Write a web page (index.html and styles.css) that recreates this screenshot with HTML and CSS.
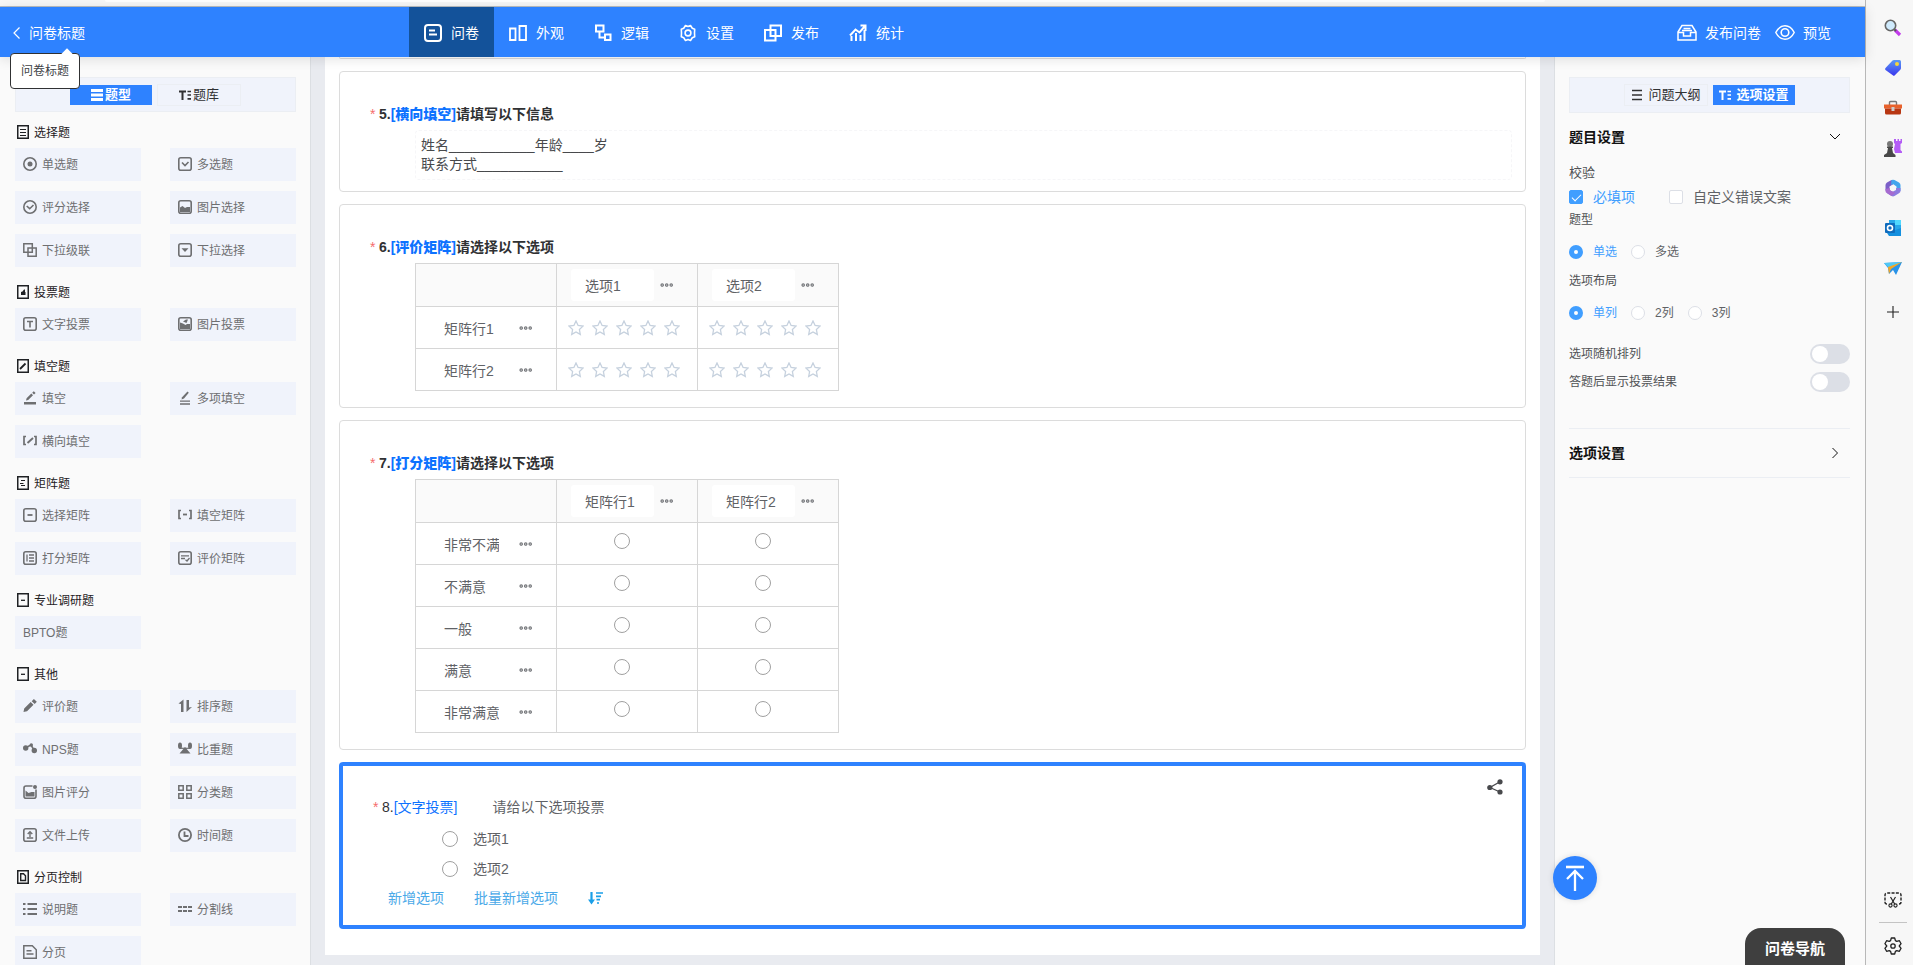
FILE: index.html
```html
<!DOCTYPE html>
<html lang="zh-CN">
<head>
<meta charset="utf-8">
<title>问卷标题</title>
<link rel="stylesheet" href="styles.css">
</head>
<body>
<svg class="sprite" aria-hidden="true">
  <symbol id="i-doc" viewBox="0 0 12 14"><rect x=".75" y=".75" width="10.500" height="12.500" fill="none" stroke="currentColor" stroke-width="1.500"/><path d="M3 4.500h6M3 7.500h6M3 10.500h6" stroke="currentColor"/></symbol>
  <symbol id="i-docvote" viewBox="0 0 12 14"><rect x=".75" y=".75" width="10.500" height="12.500" fill="none" stroke="currentColor" stroke-width="1.500"/><path d="M4 10V7l1.500-.5L7 4.500h1V7h.500v3z" fill="currentColor"/></symbol>
  <symbol id="i-docpen" viewBox="0 0 12 14"><rect x=".75" y=".75" width="10.500" height="12.500" fill="none" stroke="currentColor" stroke-width="1.500"/><path d="M3 10l5.500-5.500" stroke="currentColor" stroke-width="1.800"/></symbol>
  <symbol id="i-docmat" viewBox="0 0 12 14"><rect x=".75" y=".75" width="10.500" height="12.500" fill="none" stroke="currentColor" stroke-width="1.500"/><path d="M4 4.500h4M3 7.500h3.500M4 9.500h4" stroke="currentColor" stroke-width="1.200"/></symbol>
  <symbol id="i-docdash" viewBox="0 0 12 14"><rect x=".75" y=".75" width="10.500" height="12.500" fill="none" stroke="currentColor" stroke-width="1.500"/><path d="M4 7.300h4" stroke="currentColor" stroke-width="1.300"/></symbol>
  <symbol id="i-docpage" viewBox="0 0 12 14"><rect x=".75" y=".75" width="10.500" height="12.500" fill="none" stroke="currentColor" stroke-width="1.500"/><path d="M3.700 3.700h2.800l2 2v4.800H3.700z" fill="none" stroke="currentColor" stroke-width="1.400"/></symbol>

  <symbol id="q-radio" viewBox="0 0 14 14"><circle cx="7" cy="7" r="6.200" fill="none" stroke="currentColor" stroke-width="1.600"/><circle cx="7" cy="7" r="2.500" fill="currentColor"/></symbol>
  <symbol id="q-check" viewBox="0 0 14 14"><rect x=".8" y=".8" width="12.400" height="12.400" rx="2" fill="none" stroke="currentColor" stroke-width="1.600"/><path d="M4 5.500l3 3 3.500-3.500" fill="none" stroke="currentColor" stroke-width="1.600"/></symbol>
  <symbol id="q-ok" viewBox="0 0 14 14"><circle cx="7" cy="7" r="6.200" fill="none" stroke="currentColor" stroke-width="1.600"/><path d="M3.700 6l3 2.700L10.500 5" fill="none" stroke="currentColor" stroke-width="1.600"/></symbol>
  <symbol id="q-img" viewBox="0 0 14 14"><rect x=".8" y=".8" width="12.400" height="12.400" rx="2" fill="none" stroke="currentColor" stroke-width="1.600"/><path d="M2 12V7.500L4.500 6 7 8l2-1h3v5z" fill="currentColor"/></symbol>
  <symbol id="q-casc" viewBox="0 0 14 14"><path d="M.8.800h8.500v8.500H.8zM5 5h8.200v8.200H5z" fill="none" stroke="currentColor" stroke-width="1.500"/></symbol>
  <symbol id="q-drop" viewBox="0 0 14 14"><rect x=".8" y=".8" width="12.400" height="12.400" rx="2" fill="none" stroke="currentColor" stroke-width="1.600"/><path d="M3.500 5.200h7L7 9z" fill="currentColor"/></symbol>
  <symbol id="q-t" viewBox="0 0 14 14"><rect x=".8" y=".8" width="12.400" height="12.400" rx="2" fill="none" stroke="currentColor" stroke-width="1.600"/><path d="M4 4.500h6M7 4.500v6" stroke="currentColor" stroke-width="1.600"/></symbol>
  <symbol id="q-imgvote" viewBox="0 0 14 14"><rect x=".8" y=".8" width="12.400" height="12.400" rx="2" fill="none" stroke="currentColor" stroke-width="1.600"/><path d="M2 12V5.500l3 1L7.500 8 9 7h3v5zM5 4.500L8 2.500h2L8.500 6z" fill="currentColor"/></symbol>
  <symbol id="q-fill" viewBox="0 0 14 14"><path d="M1 11h12v2.500H1z" fill="currentColor"/><path d="M3 9.500l.6-2.300L8.300 2.500l1.700 1.700L5.200 9zM9.200 1.700L10.800.2l1.800 1.700-1.600 1.600z" fill="currentColor"/></symbol>
  <symbol id="q-fills" viewBox="0 0 14 14"><path d="M2 10.200h10M2 13h10" stroke="currentColor" stroke-width="1.300"/><path d="M3.500 8.500l.6-2.300L9.500.5l1.300 1.300L6 7.500z" fill="currentColor"/></symbol>
  <symbol id="q-hfill" viewBox="0 0 14 14"><path d="M3 2.500H1v8h2M11 2.500h2v8h-2" fill="none" stroke="currentColor" stroke-width="1.700"/><path d="M4.500 9L10 4" stroke="currentColor" stroke-width="1.900"/></symbol>
  <symbol id="q-sel" viewBox="0 0 14 14"><rect x=".8" y=".8" width="12.400" height="12.400" rx="2" fill="none" stroke="currentColor" stroke-width="1.600"/><path d="M4.500 7h5" stroke="currentColor" stroke-width="1.800"/></symbol>
  <symbol id="q-brack" viewBox="0 0 14 14"><path d="M3 2.500H1v8h2M11 2.500h2v8h-2" fill="none" stroke="currentColor" stroke-width="1.700"/><path d="M5 6.500h4" stroke="currentColor" stroke-width="1.800"/></symbol>
  <symbol id="q-score" viewBox="0 0 14 14"><rect x=".8" y=".8" width="12.400" height="12.400" rx="2" fill="none" stroke="currentColor" stroke-width="1.600"/><path d="M4 3.500v7M6 4h5M6 7h5M6 10h5" stroke="currentColor" stroke-width="1.300"/></symbol>
  <symbol id="q-eval" viewBox="0 0 14 14"><rect x=".8" y=".8" width="12.400" height="12.400" rx="2" fill="none" stroke="currentColor" stroke-width="1.600"/><path d="M3 4.800h8M3 7.500h4M7.500 8.800l1.500 1.200 2.500-3" fill="none" stroke="currentColor" stroke-width="1.300"/></symbol>
  <symbol id="q-pen" viewBox="0 0 14 14"><path d="M.5 13l.7-3.500L7.700 3l2.800 2.800L4 12.300zM8.700 2.200L10.900 0l2.900 2.800-2.100 2.100z" fill="currentColor"/></symbol>
  <symbol id="q-sort" viewBox="0 0 14 14"><path d="M.5 4.500L5.500.5V13H3V5zM8.500 1H11v7.500l3-.5-5.500 5z" fill="currentColor"/></symbol>
  <symbol id="q-nps" viewBox="0 0 14 14"><circle cx="2.700" cy="6" r="2.700" fill="currentColor"/><circle cx="11.300" cy="8.500" r="2.700" fill="currentColor"/><path d="M3 5.500l5-2.500 3 5" fill="none" stroke="currentColor" stroke-width="1.600"/><circle cx="8.300" cy="3" r="1.700" fill="currentColor"/></symbol>
  <symbol id="q-weight" viewBox="0 0 14 14"><path d="M7 5L12.500 11.500h-11z" fill="currentColor"/><ellipse cx="2" cy="3.800" rx="2" ry="3.300" fill="currentColor"/><ellipse cx="12" cy="3.800" rx="2" ry="3.300" fill="currentColor"/><path d="M2 6.300h10" stroke="currentColor" stroke-width="1.200"/></symbol>
  <symbol id="q-imgscore" viewBox="0 0 14 14"><path d="M9.500 1H3a2 2 0 0 0-2 2v8.200a2 2 0 0 0 2 2h8a2 2 0 0 0 2-2V4.500" fill="none" stroke="currentColor" stroke-width="1.600"/><path d="M2.500 11.500V5.500L5.500 8l3-1h3v4.500z" fill="currentColor"/><circle cx="12" cy="2" r="2" fill="currentColor"/></symbol>
  <symbol id="q-class" viewBox="0 0 14 14"><path d="M.8.800h4.400v4.400H.8zM8.800.8h4.400v4.400H8.800zM.8 8.800h4.400v4.400H.8zM8.800 8.800h4.400v4.400H8.800z" fill="none" stroke="currentColor" stroke-width="1.500"/></symbol>
  <symbol id="q-up" viewBox="0 0 14 14"><rect x=".8" y=".8" width="12.400" height="12.400" rx="2" fill="none" stroke="currentColor" stroke-width="1.600"/><path d="M7 9V4M4.700 6L7 3.700 9.300 6M3.800 10h6.400" fill="none" stroke="currentColor" stroke-width="1.400"/></symbol>
  <symbol id="q-time" viewBox="0 0 14 14"><circle cx="7" cy="7" r="6.100" fill="none" stroke="currentColor" stroke-width="1.800"/><path d="M6.500 3.500V8h4" fill="none" stroke="currentColor" stroke-width="1.800"/></symbol>
  <symbol id="q-list" viewBox="0 0 14 14"><path d="M4.500 2H14M4.500 7H14M4.500 12H14M0 2h2.500M0 7h2.500M0 12h2.500" stroke="currentColor" stroke-width="2.200"/></symbol>
  <symbol id="q-split" viewBox="0 0 14 14"><path d="M0 5h14M0 9h14" stroke="currentColor" stroke-width="1.800" stroke-dasharray="4 1"/></symbol>
  <symbol id="q-page" viewBox="0 0 14 14"><path d="M.8.800h8.500l4 4v8.400H.8zM3.500 5.800h5M3.500 9h7" fill="none" stroke="currentColor" stroke-width="1.500"/></symbol>

  <symbol id="n-form" viewBox="0 0 18 18"><rect x="1" y="1" width="16" height="16" rx="3" fill="none" stroke="currentColor" stroke-width="2"/><path d="M5 6.500h6M5 10.500h8" stroke="currentColor" stroke-width="2"/></symbol>
  <symbol id="n-look" viewBox="0 0 18 18"><path d="M1 4.500h5.500v11.500H1zM10.500 2H17v14h-6.500z" fill="none" stroke="currentColor" stroke-width="1.800"/></symbol>
  <symbol id="n-logic" viewBox="0 0 18 18"><path d="M2 1.500h7.500v6H2zM11 10.500h5.500V16H11zM5.500 7.500v6H11" fill="none" stroke="currentColor" stroke-width="2"/></symbol>
  <symbol id="n-gear" viewBox="0 0 18 18"><path d="M6.500 1.500L9 2.500l2.500-1 1.800 2.800 2.400 1L15.500 9l.2 3.700-2.400 1-1.800 2.800-2.500-1-2.500 1-1.800-2.800-2.400-1L2.500 9l-.2-3.700 2.400-1z" fill="none" stroke="currentColor" stroke-width="1.600" stroke-linejoin="round"/><circle cx="9" cy="9" r="2.900" fill="none" stroke="currentColor" stroke-width="1.600"/></symbol>
  <symbol id="n-pub" viewBox="0 0 18 18"><path d="M1 6h10.500v10.500H1zM6.500 1.500H17V12H6.500z" fill="none" stroke="currentColor" stroke-width="2"/></symbol>
  <symbol id="n-stat" viewBox="0 0 18 18"><path d="M2.500 17v-5M7 17V9M11.500 17v-6M15.500 17V6" stroke="currentColor" stroke-width="2"/><path d="M1 11.500L6.500 5.500l4 3L16 2M11.500 1.500h5V7" fill="none" stroke="currentColor" stroke-width="2"/></symbol>
  <symbol id="n-inbox" viewBox="0 0 20 18"><path d="M1 8l4-6.500h10L19 8v8H1zM1 8.500h5.500V12h7V8.500H19M6.500 4.500h7M5 6.500h10" fill="none" stroke="currentColor" stroke-width="1.500"/></symbol>
  <symbol id="n-eye" viewBox="0 0 20 18"><path d="M.8 8.500c4.500-9 13.900-9 18.400 0-4.500 9-13.900 9-18.400 0z" fill="none" stroke="currentColor" stroke-width="1.500"/><circle cx="10" cy="8.500" r="3.800" fill="none" stroke="currentColor" stroke-width="1.600"/></symbol>

  <symbol id="t-lines" viewBox="0 0 12 12"><path d="M1 1.500h10M1 6h10M1 10.500h10" stroke="currentColor" stroke-width="1.600"/></symbol>
  <symbol id="t-thick" viewBox="0 0 12 12"><path d="M0 1.500h12M0 6h12M0 10.500h12" stroke="currentColor" stroke-width="2.800"/></symbol>
  <symbol id="t-type" viewBox="0 0 12 12"><path d="M0 2.500h7M3.500 2.500V11" stroke="currentColor" stroke-width="2"/><path d="M8.500 2.500H12M8.500 6H12M8.500 9.800H12" stroke="currentColor" stroke-width="1.700"/></symbol>
  <symbol id="star" viewBox="0 0 16 16"><path d="M8 1l2.100 4.500 4.900.6-3.600 3.400.9 4.900L8 12l-4.300 2.400.9-4.900L1 6.100l4.900-.6z" fill="none" stroke="currentColor" stroke-width="1.300"/></symbol>
  <symbol id="dots" viewBox="0 0 14 6"><circle cx="2.200" cy="3" r="1.200" fill="none" stroke="currentColor" stroke-width="1.200"/><circle cx="6.700" cy="3" r="1.200" fill="none" stroke="currentColor" stroke-width="1.200"/><circle cx="11.200" cy="3" r="1.200" fill="none" stroke="currentColor" stroke-width="1.200"/></symbol>
</svg>

<div class="app">
  <div class="browser">
    <div class="chrome"><div class="address"></div></div>
    <header class="header">
      <a class="back" href="#"><svg width="7" height="12" viewBox="0 0 7 12"><path d="M6.500.5L1 6l5.500 5.500" fill="none" stroke="currentColor" stroke-width="1.200"/></svg>问卷标题</a>
      <nav class="nav">
        <a class="nav-item active" href="#"><svg><use href="#n-form"/></svg>问卷</a>
        <a class="nav-item" href="#"><svg><use href="#n-look"/></svg>外观</a>
        <a class="nav-item" href="#"><svg><use href="#n-logic"/></svg>逻辑</a>
        <a class="nav-item" href="#"><svg><use href="#n-gear"/></svg>设置</a>
        <a class="nav-item" href="#"><svg><use href="#n-pub"/></svg>发布</a>
        <a class="nav-item" href="#"><svg><use href="#n-stat"/></svg>统计</a>
      </nav>
      <div class="actions">
        <button type="button"><svg><use href="#n-inbox"/></svg>发布问卷</button>
        <button type="button"><svg><use href="#n-eye"/></svg>预览</button>
      </div>
      <div class="tooltip" role="tooltip">问卷标题</div>
    </header>

    <div class="workspace">
      <aside class="left">
        <div class="tabs">
          <button type="button" class="tab on"><svg><use href="#t-thick"/></svg>题型</button>
          <button type="button" class="tab"><svg><use href="#t-type"/></svg>题库</button>
        </div>
        <section class="group"><h2><svg><use href="#i-doc"/></svg>选择题</h2>
          <div class="items">
            <button type="button"><svg><use href="#q-radio"/></svg>单选题</button>
            <button type="button"><svg><use href="#q-check"/></svg>多选题</button>
            <button type="button"><svg><use href="#q-ok"/></svg>评分选择</button>
            <button type="button"><svg><use href="#q-img"/></svg>图片选择</button>
            <button type="button"><svg><use href="#q-casc"/></svg>下拉级联</button>
            <button type="button"><svg><use href="#q-drop"/></svg>下拉选择</button>
          </div></section>
        <section class="group"><h2><svg><use href="#i-docvote"/></svg>投票题</h2>
          <div class="items">
            <button type="button"><svg><use href="#q-t"/></svg>文字投票</button>
            <button type="button"><svg><use href="#q-imgvote"/></svg>图片投票</button>
          </div></section>
        <section class="group"><h2><svg><use href="#i-docpen"/></svg>填空题</h2>
          <div class="items">
            <button type="button"><svg><use href="#q-fill"/></svg>填空</button>
            <button type="button"><svg><use href="#q-fills"/></svg>多项填空</button>
            <button type="button"><svg><use href="#q-hfill"/></svg>横向填空</button>
          </div></section>
        <section class="group"><h2><svg><use href="#i-docmat"/></svg>矩阵题</h2>
          <div class="items">
            <button type="button"><svg><use href="#q-sel"/></svg>选择矩阵</button>
            <button type="button"><svg><use href="#q-brack"/></svg>填空矩阵</button>
            <button type="button"><svg><use href="#q-score"/></svg>打分矩阵</button>
            <button type="button"><svg><use href="#q-eval"/></svg>评价矩阵</button>
          </div></section>
        <section class="group"><h2><svg><use href="#i-docdash"/></svg>专业调研题</h2>
          <div class="items"><button type="button">BPTO题</button></div></section>
        <section class="group"><h2><svg><use href="#i-docdash"/></svg>其他</h2>
          <div class="items">
            <button type="button"><svg><use href="#q-pen"/></svg>评价题</button>
            <button type="button"><svg><use href="#q-sort"/></svg>排序题</button>
            <button type="button"><svg><use href="#q-nps"/></svg>NPS题</button>
            <button type="button"><svg><use href="#q-weight"/></svg>比重题</button>
            <button type="button"><svg><use href="#q-imgscore"/></svg>图片评分</button>
            <button type="button"><svg><use href="#q-class"/></svg>分类题</button>
            <button type="button"><svg><use href="#q-up"/></svg>文件上传</button>
            <button type="button"><svg><use href="#q-time"/></svg>时间题</button>
          </div></section>
        <section class="group"><h2><svg><use href="#i-docpage"/></svg>分页控制</h2>
          <div class="items">
            <button type="button"><svg><use href="#q-list"/></svg>说明题</button>
            <button type="button"><svg><use href="#q-split"/></svg>分割线</button>
            <button type="button"><svg><use href="#q-page"/></svg>分页</button>
          </div></section>
      </aside>

      <main class="center">
        <div class="sheet">
          <div class="card card-end"></div>
          <section class="card">
            <h3><i>*</i>5.<b>[横向填空]</b>请填写以下信息</h3>
            <div class="fill">姓名___________年龄____岁<br>联系方式___________</div>
          </section>
          <section class="card">
            <h3><i>*</i>6.<b>[评价矩阵]</b>请选择以下选项</h3>
            <table class="matrix">
              <tr><th></th>
                <th><div class="cell"><input type="text" value="选项1" aria-label="选项1"><svg class="dots"><use href="#dots"/></svg></div></th>
                <th><div class="cell"><input type="text" value="选项2" aria-label="选项2"><svg class="dots"><use href="#dots"/></svg></div></th></tr>
              <tr><td><div class="cell"><input type="text" value="矩阵行1" aria-label="矩阵行1"><svg class="dots"><use href="#dots"/></svg></div></td>
                <td><div class="stars"><svg><use href="#star"/></svg><svg><use href="#star"/></svg><svg><use href="#star"/></svg><svg><use href="#star"/></svg><svg><use href="#star"/></svg></div></td>
                <td><div class="stars"><svg><use href="#star"/></svg><svg><use href="#star"/></svg><svg><use href="#star"/></svg><svg><use href="#star"/></svg><svg><use href="#star"/></svg></div></td></tr>
              <tr><td><div class="cell"><input type="text" value="矩阵行2" aria-label="矩阵行2"><svg class="dots"><use href="#dots"/></svg></div></td>
                <td><div class="stars"><svg><use href="#star"/></svg><svg><use href="#star"/></svg><svg><use href="#star"/></svg><svg><use href="#star"/></svg><svg><use href="#star"/></svg></div></td>
                <td><div class="stars"><svg><use href="#star"/></svg><svg><use href="#star"/></svg><svg><use href="#star"/></svg><svg><use href="#star"/></svg><svg><use href="#star"/></svg></div></td></tr>
            </table>
          </section>
          <section class="card">
            <h3><i>*</i>7.<b>[打分矩阵]</b>请选择以下选项</h3>
            <table class="matrix">
              <tr><th></th>
                <th><div class="cell"><input type="text" value="矩阵行1" aria-label="矩阵行1"><svg class="dots"><use href="#dots"/></svg></div></th>
                <th><div class="cell"><input type="text" value="矩阵行2" aria-label="矩阵行2"><svg class="dots"><use href="#dots"/></svg></div></th></tr>
              <tr><td><div class="cell"><input type="text" value="非常不满意" aria-label="非常不满意"><svg class="dots"><use href="#dots"/></svg></div></td><td class="pick"><input type="radio" name="c1" aria-label="非常不满意 1"></td><td class="pick"><input type="radio" name="c2" aria-label="非常不满意 2"></td></tr>
              <tr><td><div class="cell"><input type="text" value="不满意" aria-label="不满意"><svg class="dots"><use href="#dots"/></svg></div></td><td class="pick"><input type="radio" name="c1" aria-label="不满意 1"></td><td class="pick"><input type="radio" name="c2" aria-label="不满意 2"></td></tr>
              <tr><td><div class="cell"><input type="text" value="一般" aria-label="一般"><svg class="dots"><use href="#dots"/></svg></div></td><td class="pick"><input type="radio" name="c1" aria-label="一般 1"></td><td class="pick"><input type="radio" name="c2" aria-label="一般 2"></td></tr>
              <tr><td><div class="cell"><input type="text" value="满意" aria-label="满意"><svg class="dots"><use href="#dots"/></svg></div></td><td class="pick"><input type="radio" name="c1" aria-label="满意 1"></td><td class="pick"><input type="radio" name="c2" aria-label="满意 2"></td></tr>
              <tr><td><div class="cell"><input type="text" value="非常满意" aria-label="非常满意"><svg class="dots"><use href="#dots"/></svg></div></td><td class="pick"><input type="radio" name="c1" aria-label="非常满意 1"></td><td class="pick"><input type="radio" name="c2" aria-label="非常满意 2"></td></tr>
            </table>
          </section>
          <section class="card selected">
            <button type="button" class="share" aria-label="分享"><svg width="16" height="16" viewBox="0 0 16 16"><path d="M13 2.800L3 8.500l10 4.500" fill="none" stroke="currentColor" stroke-width="1.300"/><circle cx="13" cy="2.800" r="2.600" fill="currentColor"/><circle cx="2.800" cy="8.500" r="2.600" fill="currentColor"/><circle cx="13" cy="13" r="2.600" fill="currentColor"/></svg></button>
            <h3><i>*</i>8.<b>[文字投票]</b><span class="prompt">请给以下选项投票</span></h3>
            <div class="options">
              <label><input type="radio" name="vote">选项1</label>
              <label><input type="radio" name="vote">选项2</label>
            </div>
            <div class="links">
              <a href="#">新增选项</a><a href="#">批量新增选项</a>
              <a href="#" aria-label="排序"><svg width="15" height="13" viewBox="0 0 15 13"><path d="M3.500 0v9" stroke="#1a9fe8" stroke-width="2.200"/><path d="M0 7.500h7l-3.500 5z" fill="#1a9fe8"/><path d="M8 1h7M8 4.300h5M8.500 7.600H12M9 11h2" stroke="#1a9fe8" stroke-width="1.700"/></svg></a>
            </div>
          </section>
        </div>
      </main>

      <aside class="right">
        <div class="tabs">
          <button type="button" class="tab wide"><svg><use href="#t-lines"/></svg>问题大纲</button>
          <button type="button" class="tab wide on"><svg><use href="#t-type"/></svg>选项设置</button>
        </div>
        <button type="button" class="fold">题目设置<svg width="12" height="12" viewBox="0 0 12 12"><path d="M1 3l5 5 5-5" fill="none" stroke="currentColor"/></svg></button>
        <div class="settings">
          <div class="caption verify">校验</div>
          <div class="row checks">
            <label class="picked"><input type="checkbox" checked>必填项</label>
            <label><input type="checkbox">自定义错误文案</label>
          </div>
          <div class="caption kind">题型</div>
          <div class="row">
            <label class="picked"><input type="radio" name="kind" checked>单选</label>
            <label><input type="radio" name="kind">多选</label>
          </div>
          <div class="caption layout">选项布局</div>
          <div class="row">
            <label class="picked"><input type="radio" name="cols" checked>单列</label>
            <label><input type="radio" name="cols">2列</label>
            <label><input type="radio" name="cols">3列</label>
          </div>
          <div class="switches">
            <label>选项随机排列<input type="checkbox" role="switch"></label>
            <label>答题后显示投票结果<input type="checkbox" role="switch"></label>
          </div>
        </div>
        <button type="button" class="fold lined">选项设置<svg width="12" height="12" viewBox="0 0 12 12"><path d="M3.500 1l5 5-5 5" fill="none" stroke="currentColor"/></svg></button>
      </aside>
      <button type="button" class="to-top" aria-label="回到顶部"><svg width="20" height="27" viewBox="0 0 20 27"><path d="M1 2h18" stroke="#fff" stroke-width="2.600"/><path d="M10 26V6M2 14l8-8 8 8" fill="none" stroke="#fff" stroke-width="2.300"/></svg></button>
      <button type="button" class="map">问卷导航</button>
    </div>
  </div>

  <aside class="dock">
    <a href="#" aria-label="搜索"><svg viewBox="0 0 18 18"><path d="M11 11l5 5" stroke="#c23bea" stroke-width="3.200"/><path d="M10 10l2 2" stroke="#555" stroke-width="2"/><circle cx="6.500" cy="6.500" r="5.200" fill="#cfeafc" stroke="#666" stroke-width="1.600"/></svg></a>
    <a href="#" aria-label="购物"><svg viewBox="0 0 18 18"><defs><linearGradient id="g1" x2="0" y2="1"><stop stop-color="#5b9bf5"/><stop offset="1" stop-color="#3a35ee"/></linearGradient></defs><path d="M8.500 1.500q.5-.5 1.500-.5h5.500Q17 1 17 2.500V9q0 1-.7 1.700l-5.500 5.600q-1 1-2 0L1.500 11q-1-1 0-2z" fill="url(#g1)"/><circle cx="13" cy="5" r="2" fill="#f5d63b"/></svg></a>
    <a href="#" aria-label="工具"><svg viewBox="0 0 18 18"><path d="M5.500 6V3.500q0-1 1-1h5q1 0 1 1V6" fill="none" stroke="#777" stroke-width="1.400"/><path d="M0 5.500h18v4H0z" fill="#e8622c"/><path d="M1 9.500h16V14q0 1.500-1.500 1.500h-13Q1 15.500 1 14z" fill="#b83712"/><path d="M7.500 8h3v4h-3z" fill="#ccc"/></svg></a>
    <a href="#" aria-label="游戏"><svg viewBox="0 0 18 18"><circle cx="6" cy="5" r="3" fill="#777"/><path d="M3 7.500h6v1.500H8l1 5 2.500 2V18H0v-2l3-2 1-5H3z" fill="#484848"/><path d="M10 0h2v2h1.500V0H15v2h1.500V0H18v4l-1.500 1v6L18 12.500V14h-7l-1-4 1-5-1-1z" fill="#b35cf5"/></svg></a>
    <a href="#" aria-label="Microsoft 365"><svg viewBox="0 0 18 18"><path d="M7.500 1L3 3.500q-1.500 1-1.500 2.500v5.500L5.500 13V7.500L12 3.500z" fill="#7b5fc8"/><path d="M7.500 1q1.500-.7 3 0L15 3.500q1.500 1 1.500 2.500v6l-4-2.500V7.500L9 5 7 6z" fill="#43a5ed"/><path d="M16.500 9v3q0 1.500-1.500 2.300L10.500 17q-1.500.8-3 0L2 13.500q2.500.5 5-1l5.500-3.500z" fill="#8d7be0"/><path d="M1.500 10v2q0 1.300 1.300 2L7.500 17l4-3.500-4-1.500-2-3z" fill="#a66bd0"/><path d="M9 6.300l3 1.700v3l-3 1.600-3-1.600V8z" fill="#f7f7f7"/></svg></a>
    <a href="#" aria-label="Outlook"><svg viewBox="0 0 18 18"><path d="M5 1h12v16H5z" fill="#28a8ea"/><path d="M11 1h6v5h-6z" fill="#50d9ff"/><path d="M3 14l14-5v8H5z" fill="#1490df"/><rect x="1" y="4" width="10" height="10" rx="1" fill="#0f6cbd"/><circle cx="6" cy="9" r="2.500" fill="none" stroke="#fff" stroke-width="1.600"/></svg></a>
    <a href="#" aria-label="发送"><svg viewBox="0 0 18 18"><path d="M0 4l18-1-6 13-3-5-4 4-1-6z" fill="#2993e8"/><path d="M0 4l18-1L5 9z" fill="#50c8f5"/><path d="M4 8l14-5L7 10l-2 5z" fill="#f5a623"/></svg></a>
    <a href="#" class="plus" aria-label="添加"><svg viewBox="0 0 18 18"><path d="M9 3v12M3 9h12" stroke="#222" stroke-width="1.100"/></svg></a>
    <a href="#" class="clip" aria-label="截图"><svg viewBox="0 0 18 18"><path d="M3 13Q1 13 1 11V4q0-2 2-2h12q2 0 2 2v7q0 2-2 2" fill="none" stroke="#222" stroke-width="1.400" stroke-dasharray="3 1.300"/><path d="M6.500 6l4.200 7M11.500 6l-4.200 7" stroke="#222" stroke-width="1.200"/><circle cx="6.500" cy="14.500" r="1.600" fill="none" stroke="#222" stroke-width="1.100"/><circle cx="11.500" cy="14.500" r="1.600" fill="none" stroke="#222" stroke-width="1.100"/></svg></a>
    <a href="#" class="gear" aria-label="设置"><svg viewBox="0 0 18 18"><path d="M7.300 1h3.400l.7 2.600 1.400.8 2.600-.7 1.700 3L15.200 9l1.900 2.300-1.700 3-2.600-.7-1.400.8-.7 2.600H7.300l-.7-2.600-1.400-.8-2.600.7-1.700-3L2.800 9 .9 6.700l1.700-3 2.600.7 1.400-.8z" fill="none" stroke="#222" stroke-width="1.300" stroke-linejoin="round"/><circle cx="9" cy="9" r="2.200" fill="none" stroke="#222" stroke-width="1.300"/></svg></a>
  </aside>
</div>
</body>
</html>
```

FILE: styles.css
```css
* { box-sizing: border-box; }
body {
  margin: 0;
  font-family: "Liberation Sans", "Noto Sans CJK SC", sans-serif;
  font-size: 14px;
  line-height: 20px;
  color: #606266;
}
button { font: inherit; color: inherit; border: 0; padding: 0; background: none; cursor: pointer; }
input { font: inherit; color: inherit; margin: 0; }
a { color: inherit; text-decoration: none; }
svg { display: block; flex: none; }
h2, h3 { margin: 0; font-size: inherit; }
.sprite { display: none; }

.app { display: flex; height: 100vh; overflow: hidden; background: #f7f7f7; }
.browser { flex: 1; min-width: 0; display: flex; flex-direction: column; border-right: 1px solid #b8b8b8; }
.chrome { height: 7px; border-bottom: 1px solid #b9bdc0; padding: 0 320px 0 105px; }
.address { height: 2px; background: #fff; border-radius: 0 0 8px 8px; }

.header {
  position: relative; z-index: 2; display: flex; align-items: stretch; height: 50px;
  background: #2e82ff; color: #fff; box-shadow: 0 2px 12px rgba(0, 0, 0, .12);
}
.back { flex: 0 0 409px; display: flex; align-items: center; gap: 9px; padding: 1px 0 0 13px; }
.nav { display: flex; }
.nav-item { display: flex; align-items: center; gap: 9px; width: 85px; padding: 1px 0 0 15px; }
.nav-item svg { width: 18px; height: 18px; }
.nav-item.active { background: #13529a; }
.actions { display: flex; gap: 14px; margin-left: auto; padding: 1px 34px 0 0; }
.actions button { display: flex; align-items: center; gap: 8px; }
.actions svg { width: 20px; height: 18px; }
.tooltip {
  position: absolute; left: 10px; top: 46px; padding: 7px 10px; border: 1px solid #303133;
  border-radius: 4px; background: #fff; color: #404246; font-size: 12px; line-height: 20px;
}
.tooltip::before {
  content: ""; position: absolute; left: 52px; top: -4px; width: 8px; height: 8px;
  background: #fff; transform: rotate(45deg);
}

.workspace { position: relative; flex: 1; min-height: 0; display: flex; background: #e9ebf0; }
.left { flex: 0 0 311px; overflow: hidden; padding: 20px 14px 0 15px; background: #fafafa; border-right: 1px solid #dcdfe3; }
.tabs {
  display: flex; align-items: center; justify-content: center; gap: 5px; height: 35px;
  border: 1px solid #ebeef3; background: #f0f3fb; color: #303133; font-size: 13px;
}
.tab { display: flex; align-items: center; justify-content: center; gap: 2px; width: 84px; height: 22px; border: 1px solid #ebeef3; }
.tab svg { width: 12px; height: 12px; }
.tab.wide { gap: 5px; }
.tab.on { width: 82px; height: 20px; border: 0; background: #2e82ff; color: #fff; font-weight: bold; }

.group { padding-top: 16px; }
.tabs + .group { padding-top: 11px; }
.group h2 { display: flex; align-items: center; gap: 5px; height: 20px; margin: 0 0 5px 2px; font-size: 12px; font-weight: normal; color: #1f2124; }
.group h2 svg { width: 12px; height: 14px; margin-bottom: 2px; }
.items { display: grid; grid-template-columns: 1fr 1fr; gap: 10px 29px; }
.items button { display: flex; align-items: center; gap: 5px; height: 33px; padding-left: 8px; background: #f0f3fb; color: #6e6f71; font-size: 12px; }
.items svg { width: 14px; height: 14px; margin-bottom: 1px; }

.center { flex: 1; min-width: 0; overflow: hidden; padding: 0 14px; }
.sheet { display: flex; flex-direction: column; gap: 12px; padding: 0 14px 26px; background: #fff; }
.card { position: relative; border: 1px solid #dcdcdc; border-radius: 4px; padding: 32px 13px 11px 30px; }
.card-end { height: 2px; padding: 0; border-top: 0; border-radius: 0 0 4px 4px; }
.card h3 { display: flex; color: #303133; }
.card h3 i { width: 9px; color: #f56c6c; font-style: normal; font-weight: normal; }
.card h3 b { color: #0d72ff; }
.fill { margin: 6px 0 0 45px; padding: 5px; border: 1px dashed #f6f6f8; border-radius: 4px; line-height: 19px; color: #48494c; }
.matrix { width: 424px; margin: 6px 0 5px 45px; table-layout: fixed; border-collapse: collapse; }
.matrix tr { height: 42px; }
.matrix tr:first-child { height: 43px; }
.matrix th, .matrix td { padding: 0; border: 1px solid #d6d6d6; font-weight: normal; }
.matrix th { background: #fafafa; }
.cell { display: flex; align-items: center; gap: 5px; padding-left: 13px; }
.cell input { width: 85px; height: 34px; padding: 0 14px; border: 1px solid transparent; border-radius: 4px; background: #fff; background-clip: padding-box; }
.dots { width: 14px; height: 6px; color: #75777b; }
.stars { display: flex; gap: 8px; padding-left: 11px; color: #c6d1de; }
.stars svg { width: 16px; height: 16px; }
.pick { text-align: center; line-height: 16px; }
.card input[type="radio"] { appearance: none; width: 16px; height: 16px; border: 1px solid #a0a0a0; border-radius: 50%; background: #fff; }
.pick input { margin: 0 10px 6px 0; vertical-align: top; }

.card.selected { border: 4px solid #2e82ff; padding: 31px 13px 17px 30px; }
.selected h3, .selected h3 b { font-weight: normal; }
.prompt { margin-left: 35px; color: #606266; }
.share { position: absolute; right: 19px; top: 13px; color: #48494c; }
.options { margin: 7px 0 4px 69px; }
.options label { display: flex; align-items: center; gap: 15px; height: 30px; }
.links { display: flex; align-items: center; gap: 30px; padding-left: 15px; color: #4aa9e8; }

.right { flex: 0 0 311px; padding: 20px 15px 0 14px; background: #fafafa; border-left: 1px solid #dcdfe3; }
.right .tabs { height: 36px; }
.fold { display: flex; align-items: center; justify-content: space-between; width: 100%; height: 48px; padding-right: 9px; color: #111; font-weight: bold; }
.fold.lined { height: 50px; border-top: 1px solid #ebeef3; border-bottom: 1px solid #ebeef3; }
.settings { font-size: 12px; padding-bottom: 36px; }
.caption { color: #505255; }
.verify { margin-top: 2px; font-size: 13px; }
.kind { margin-top: 3px; }
.layout { margin-top: 9px; }
.row { display: flex; align-items: center; gap: 14px; height: 20px; }
.row label { display: flex; align-items: center; gap: 10px; }
.checks { gap: 34px; margin-top: 4px; font-size: 14px; }
.kind + .row, .layout + .row { margin-top: 12px; }
.picked { color: #409eff; }
.row input { appearance: none; width: 14px; height: 14px; border: 1px solid #dcdfe6; background: #fff; }
.row input[type="radio"] { border-radius: 50%; }
.row input[type="checkbox"] { border-radius: 2px; }
.row input[type="radio"]:checked { border: 5px solid #409eff; }
.row input[type="checkbox"]:checked { position: relative; border-color: #409eff; background: #409eff; }
.row input[type="checkbox"]:checked::after {
  content: ""; position: absolute; left: 4px; top: 1px; width: 4px; height: 8px;
  border: solid #fff; border-width: 0 1px 1px 0; transform: rotate(45deg);
}
.switches { display: grid; gap: 8px; margin-top: 21px; color: #505255; }
.switches label { display: flex; justify-content: space-between; height: 20px; }
.switches input { appearance: none; width: 40px; height: 20px; padding: 2px; border-radius: 10px; background: #dcdfe6; }
.switches input::before { content: ""; display: block; width: 16px; height: 16px; border-radius: 50%; background: #fff; }

.to-top {
  position: absolute; right: 268px; bottom: 65px; display: flex; align-items: center; justify-content: center;
  width: 44px; height: 44px; border-radius: 50%; background: #2e82ff; box-shadow: 0 0 6px rgba(0, 0, 0, .12);
}
.map {
  position: absolute; right: 20px; bottom: 0; width: 100px; height: 37px; padding-top: 4px;
  border-radius: 16px 16px 0 0; background: #3f3f3f; color: #fff; font-size: 15px; font-weight: bold;
}

.dock { flex: 0 0 47px; display: flex; flex-direction: column; align-items: center; gap: 22px; padding: 19px 0 10px 6px; }
.dock svg { width: 18px; height: 18px; }
.plus { margin-top: 4px; }
.clip { margin-top: auto; }
.gear { margin-top: -9px; padding: 14px 5px 0; border-top: 1px solid #c4c4c4; }
```
